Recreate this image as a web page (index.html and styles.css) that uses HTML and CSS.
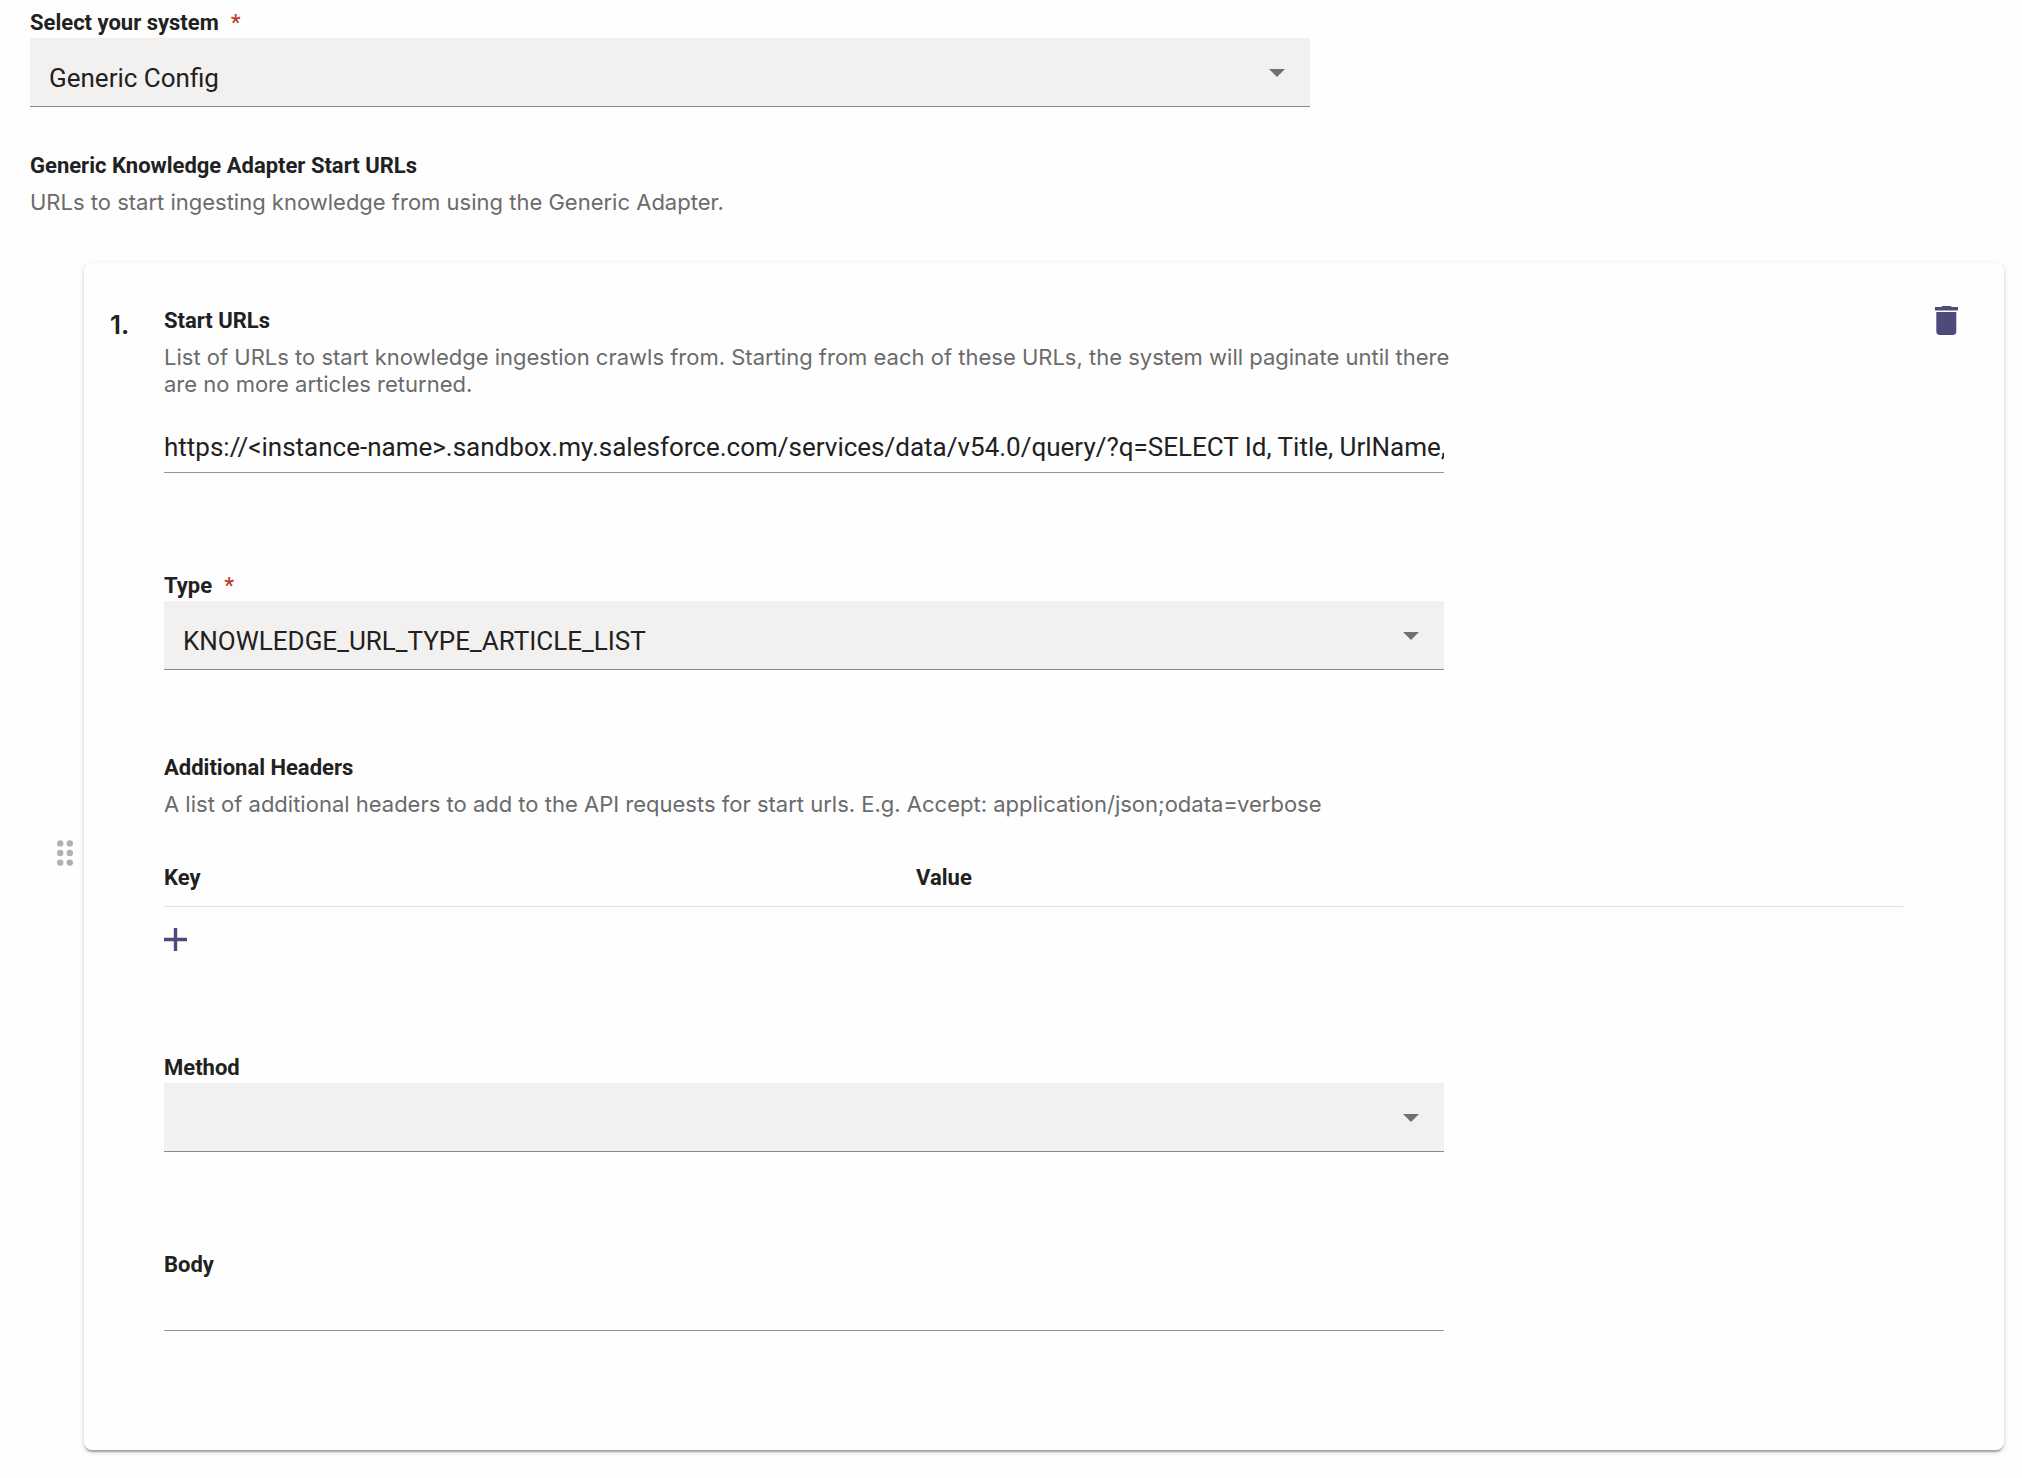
FILE: index.html
```html
<!DOCTYPE html>
<html lang="en">
<head>
<meta charset="utf-8">
<title>Generic Config</title>
<link rel="stylesheet" href="styles.css">
</head>
<body>
<form class="page">
  <div class="field">
    <label class="label" for="system">Select your system<span class="required">*</span></label>
    <div class="select">
      <select class="select-control" id="system" required><option>Generic Config</option></select>
      <svg class="select-arrow" viewBox="0 0 16 8" aria-hidden="true"><path d="M0 0h16L8 8z"/></svg>
    </div>
  </div>

  <section class="section">
    <h2 class="label">Generic Knowledge Adapter Start URLs</h2>
    <p class="hint">URLs to start ingesting knowledge from using the Generic Adapter.</p>

    <div class="item">
      <button class="icon-button handle" type="button" aria-label="Reorder">
        <svg width="16" height="26" viewBox="0 0 16 26" aria-hidden="true">
          <circle cx="3.200" cy="3.400" r="3.200"/><circle cx="12.800" cy="3.400" r="3.200"/>
          <circle cx="3.200" cy="13" r="3.200"/><circle cx="12.800" cy="13" r="3.200"/>
          <circle cx="3.200" cy="22.600" r="3.200"/><circle cx="12.800" cy="22.600" r="3.200"/>
        </svg>
      </button>

      <div class="card">
        <span class="number">1.</span>

        <div class="card-body">
          <div class="field">
            <label class="label" for="start-url">Start URLs</label>
            <p class="hint">List of URLs to start knowledge ingestion crawls from. Starting from each of these URLs, the system will paginate until there are no more articles returned.</p>
          </div>
          <div class="field">
            <input class="text-input after-hint" id="start-url" type="text" value="https://&lt;instance-name&gt;.sandbox.my.salesforce.com/services/data/v54.0/query/?q=SELECT Id, Title, UrlName, LastPublishedDate FROM Knowledge__kav">
          </div>

          <div class="field gap-large">
            <label class="label" for="type">Type<span class="required">*</span></label>
            <div class="select">
              <select class="select-control" id="type" required><option>KNOWLEDGE_URL_TYPE_ARTICLE_LIST</option></select>
              <svg class="select-arrow" viewBox="0 0 16 8" aria-hidden="true"><path d="M0 0h16L8 8z"/></svg>
            </div>
          </div>

          <div class="headers">
            <h3 class="label">Additional Headers</h3>
            <p class="hint">A list of additional headers to add to the API requests for start urls. E.g. Accept: application/json;odata=verbose</p>
            <table class="header-table">
              <thead><tr><th class="label key" scope="col">Key</th><th class="label" scope="col">Value</th></tr></thead>
            </table>
            <button class="icon-button add" type="button" aria-label="Add header">
              <svg width="23" height="23" viewBox="0 0 23 23" aria-hidden="true"><path d="M9.800 0h3.400v9.800H23v3.400h-9.800V23H9.800v-9.800H0V9.800h9.800z"/></svg>
            </button>
          </div>

          <div class="field gap-large">
            <label class="label" for="method">Method</label>
            <div class="select">
              <select class="select-control" id="method"><option></option></select>
              <svg class="select-arrow" viewBox="0 0 16 8" aria-hidden="true"><path d="M0 0h16L8 8z"/></svg>
            </div>
          </div>

          <div class="field gap-large">
            <label class="label" for="body">Body</label>
            <input class="text-input after-label" id="body" type="text">
          </div>
        </div>

        <button class="icon-button" type="button" aria-label="Delete">
          <svg width="23" height="30" viewBox="0 0 23 30" aria-hidden="true"><path d="M7.500 0h8l1.200 1H23v3.500H0V1h6.300zM1.300 6h20v19.700c0 1.800-1.500 3.300-3.300 3.300H4.600c-1.800 0-3.300-1.500-3.300-3.300z"/></svg>
        </button>
      </div>
    </div>
  </section>
</form>
</body>
</html>
```

FILE: styles.css
```css
* {
  box-sizing: border-box;
}

body {
  margin: 0;
  background: #fefefe;
  color: #212121;
  font-family: Roboto, "Liberation Sans", sans-serif;
}

.page {
  padding: 8px 18px 28px 30px;
}

.field {
  max-width: 1280px;
}

.label {
  display: block;
  margin: 0;
  font-size: 22px;
  font-weight: 700;
  line-height: 30px;
}

.required {
  margin-left: 12px;
  color: #c0392b;
  font-weight: 500;
}

.hint {
  margin: 8px -16px 0 0;
  color: #6b6b6b;
  font-family: Inter, "Liberation Sans", sans-serif;
  font-size: 22px;
  line-height: 27px;
}

/* Filled drop-down with the arrow laid in the same grid cell */
.select {
  display: grid;
}

.select-control {
  grid-area: 1 / 1;
  width: 100%;
  height: 69px;
  padding: 12px 56px 0 19px;
  border: 0;
  border-bottom: 1px solid #8b8b8a;
  border-radius: 0;
  background: #f3f1ef;
  color: inherit;
  font-family: inherit;
  font-size: 26px;
  appearance: none;
}

.select-arrow {
  grid-area: 1 / 1;
  place-self: center end;
  width: 16px;
  height: 8px;
  margin-right: 25px;
  fill: #707070;
  pointer-events: none;
}

.text-input {
  display: block;
  width: 100%;
  height: 46px;
  padding: 0 0 5px;
  border: 0;
  border-bottom: 1px solid #949494;
  border-radius: 0;
  background: transparent;
  color: inherit;
  font-family: inherit;
  font-size: 26px;
}

.after-hint {
  margin-top: 29px;
}

.after-label {
  margin-top: 5px;
}

.gap-large {
  margin-top: 98px;
}

.section {
  margin-top: 44px;
}

.item {
  display: flex;
  align-items: center;
  margin-top: 47px;
}

.icon-button {
  display: flex;
  flex: none;
  padding: 0;
  border: 0;
  background: none;
  color: #4d4a7c;
  cursor: pointer;
}

.icon-button svg {
  fill: currentColor;
}

.handle {
  padding: 0 11px 7px 27px;
  color: #b0b0b0;
}

.card {
  display: flex;
  flex: 1;
  align-items: flex-start;
  min-width: 0;
  padding: 43px 46px 119px 26px;
  border-radius: 8px;
  background: #fefefe;
  box-shadow: 0 4px 2px -2px rgba(0, 0, 0, 0.2), 0 2px 2px rgba(0, 0, 0, 0.14), 0 2px 6px rgba(0, 0, 0, 0.12);
}

.number {
  flex: none;
  width: 54px;
  padding-top: 4px;
  font-family: Inter, "Liberation Sans", sans-serif;
  font-size: 26px;
  font-weight: 600;
  line-height: 30px;
}

.card-body {
  flex: 1;
  min-width: 0;
  margin-right: 32px;
}

.headers {
  margin-top: 83px;
  padding-bottom: 4px;
}

.header-table {
  width: 100%;
  margin-top: 45px;
  border-spacing: 0;
  table-layout: fixed;
}

.header-table th {
  display: table-cell;
  padding: 0 0 13px;
  border-bottom: 1px solid #e0e0e0;
  text-align: left;
}

.key {
  width: 43.25%;
}

.add {
  margin-top: 21px;
}
```
